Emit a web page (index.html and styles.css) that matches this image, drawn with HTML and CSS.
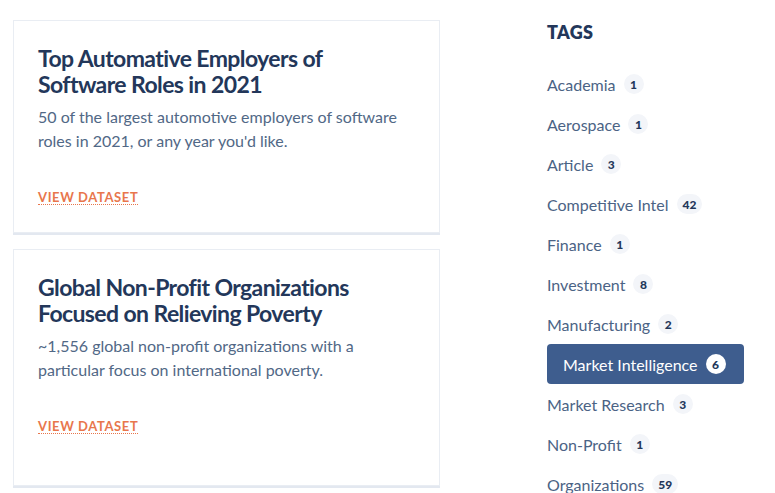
FILE: index.html
```html
<!DOCTYPE html>
<html>
<head>
<meta charset="utf-8">
<link rel="stylesheet" href="styles.css">
</head>
<body>
<div class="page">
  <main class="cards">
    <article class="card card-a">
      <h2 class="card-title">Top Automative Employers of Software Roles in 2021</h2>
      <p class="card-desc">50 of the largest automotive employers of software roles in 2021, or any year you'd like.</p>
      <a class="card-link" href="#">VIEW DATASET</a>
    </article>
    <article class="card card-b">
      <h2 class="card-title">Global Non-Profit Organizations Focused on Relieving Poverty</h2>
      <p class="card-desc">~1,556 global non-profit organizations with a particular focus on international poverty.</p>
      <a class="card-link" href="#">VIEW DATASET</a>
    </article>
  </main>
  <aside class="tags">
    <h3 class="tags-title">TAGS</h3>
    <ul class="tag-list">
      <li class="tag"><span class="tag-name">Academia</span><span class="badge">1</span></li>
      <li class="tag"><span class="tag-name">Aerospace</span><span class="badge">1</span></li>
      <li class="tag"><span class="tag-name">Article</span><span class="badge">3</span></li>
      <li class="tag"><span class="tag-name">Competitive Intel</span><span class="badge">42</span></li>
      <li class="tag"><span class="tag-name">Finance</span><span class="badge">1</span></li>
      <li class="tag"><span class="tag-name">Investment</span><span class="badge">8</span></li>
      <li class="tag"><span class="tag-name">Manufacturing</span><span class="badge">2</span></li>
      <li class="tag active"><span class="tag-name">Market Intelligence</span><span class="badge">6</span></li>
      <li class="tag"><span class="tag-name">Market Research</span><span class="badge">3</span></li>
      <li class="tag"><span class="tag-name">Non-Profit</span><span class="badge">1</span></li>
      <li class="tag"><span class="tag-name">Organizations</span><span class="badge">59</span></li>
    </ul>
  </aside>
</div>
</body>
</html>
```

FILE: styles.css
```css
* { box-sizing: border-box; }
html, body { margin: 0; padding: 0; background: #fff; }
body {
  font-family: Lato, "Noto Sans", sans-serif;
  color: #4a6080;
  overflow: hidden;
  height: 493px;
}
.page {
  display: flex;
  padding: 20px 0 0 13px;
}
.cards {
  width: 427px;
  display: flex;
  flex-direction: column;
  gap: 16px;
}
.card {
  background: #fff;
  border: 1px solid #e9edf3;
  box-shadow: 0 2px 0 #e3e8f0;
  padding: 24px 24px 0 24px;
}
.card-a { height: 213px; }
.card-b { height: 237px; }
.card-title {
  margin: 0;
  max-width: 340px;
  font-size: 23px;
  line-height: 26px;
  font-weight: 700;
  color: #23375a;
  letter-spacing: -0.6px;
}
.card-desc {
  margin: 8px 0 0 0;
  font-size: 16px;
  line-height: 24px;
  font-weight: 400;
  color: #516886;
}
.card-link {
  display: inline-block;
  margin-top: 37px;
  font-size: 13px;
  font-weight: 700;
  color: #e8764c;
  text-decoration: none;
  border-bottom: 1px dotted #e8764c;
  line-height: 14px;
  letter-spacing: 0.6px;
}
.tags {
  margin-left: 107px;
  width: 200px;
}
.tags-title {
  margin: 2px 0 0 0;
  font-size: 18px;
  line-height: 20px;
  font-weight: 800;
  color: #23375a;
  letter-spacing: 0.3px;
}
.tag-list {
  list-style: none;
  margin: 22px 0 0 0;
  padding: 0;
  display: flex;
  flex-direction: column;
}
.tag {
  height: 40px;
  display: flex;
  align-items: center;
  gap: 8px;
  font-size: 16px;
  color: #4b6385;
}
.badge {
  display: inline-flex;
  align-items: center;
  justify-content: center;
  min-width: 20px;
  height: 20px;
  padding: 0 6px;
  border-radius: 10px;
  background: #f3f5f9;
  color: #23375a;
  font-size: 12px;
  font-weight: 900;
}
.tag.active {
  background: #3e5d8e;
  color: #fff;
  border-radius: 4px;
  padding-left: 16px;
  width: 197px;
}
.tag.active .badge {
  background: #fff;
  color: #23375a;
}
```
